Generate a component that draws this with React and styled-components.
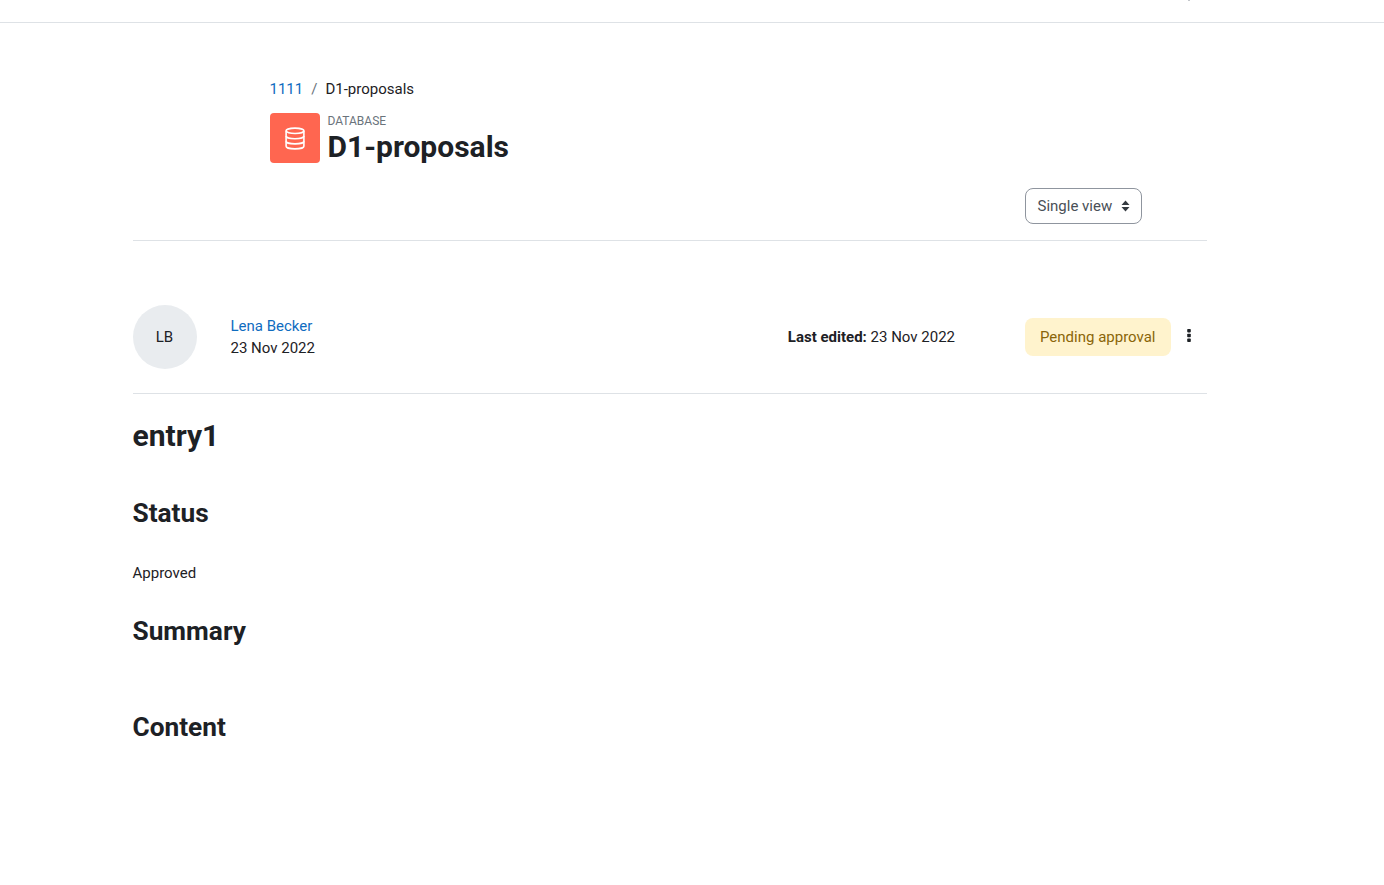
import React from "react";
import styled, { createGlobalStyle } from "styled-components";

const Global = createGlobalStyle`
  html, body { margin: 0; padding: 0; background: #fff; }
  body { font-family: Roboto, "Liberation Sans", sans-serif; font-size: 15px; line-height: 22.5px; color: #1d2125; }
  h1, h2, h3, p { margin: 0; }
`;

const Page = styled.div`
  height: 885px;
  overflow: hidden;
`;
const TopBar = styled.header`
  height: 22px;
  border-bottom: 1px solid #dee2e6;
  position: relative;
`;
const ClippedMark = styled.span`
  position: absolute;
  left: 1188px;
  top: 0;
  width: 2px;
  height: 1px;
  background: #c4c7cb;
`;
const Main = styled.main`
  width: 1074px;
  margin-left: 132.5px;
`;
const HeaderBlock = styled.section`
  padding: 55px 64.5px 16px 137.5px;
  border-bottom: 1px solid #dee2e6;
`;
const Crumbs = styled.nav`
  display: flex;
  align-items: center;
  height: 22px;
  margin-left: -0.5px;
`;
const Crumb = styled.a`
  color: #0f6cbf;
  text-decoration: none;
`;
const CrumbSep = styled.span`
  color: #6a737b;
  padding: 0 8px;
`;
const Title = styled.div`
  display: flex;
  gap: 8px;
  margin-top: 13px;
`;
const Badge = styled.div`
  width: 50px;
  height: 50px;
  margin-left: -0.5px;
  border-radius: 4px;
  background: #ff6650;
  display: flex;
  align-items: center;
  justify-content: center;
`;
const TitleText = styled.div`
  display: flex;
  flex-direction: column;
`;
const Kind = styled.div`
  font-size: 12px;
  line-height: 16px;
  color: #6a737b;
`;
const H1 = styled.h1`
  font-size: 30px;
  line-height: 36px;
  font-weight: 700;
`;
const ToolRow = styled.div`
  display: flex;
  justify-content: flex-end;
  margin-top: 23px;
`;
const SelectBox = styled.div`
  width: 117px;
  height: 36px;
  box-sizing: border-box;
  border: 1px solid #8f959e;
  border-radius: 8px;
  padding: 0 11.5px;
  display: flex;
  align-items: center;
  justify-content: space-between;
  color: #495057;
`;
const EntryRow = styled.section`
  display: flex;
  align-items: center;
  padding: 64px 0 24px;
  border-bottom: 1px solid #dee2e6;
`;
const Avatar = styled.div`
  width: 64px;
  height: 64px;
  border-radius: 50%;
  background: #e9ecef;
  display: flex;
  align-items: center;
  justify-content: center;
  flex: none;
`;
const Author = styled.div`
  margin-left: 34px;
  flex: 1;
`;
const Edited = styled.div`
  margin-right: 70px;
`;
const Pill = styled.div`
  background: #fff3cd;
  color: #8a6508;
  border-radius: 8px;
  height: 38px;
  padding: 0 15px;
  display: flex;
  align-items: center;
`;
const Kebab = styled.div`
  width: 36px;
  box-sizing: border-box;
  padding-left: 16px;
  display: flex;
  margin-bottom: 4px;
`;
const EntryTitle = styled.h2`
  font-size: 30px;
  line-height: 36px;
  font-weight: 700;
  margin-top: 24px;
`;
const FieldTitle = styled.h3`
  font-size: 26.25px;
  line-height: 32px;
  font-weight: 700;
  margin-top: ${(p) => p.$gap}px;
`;
const FieldValue = styled.p`
  margin-top: 33px;
`;

const DbIcon = () => (
  <svg width="20" height="23" viewBox="0 0 20 23" fill="none" stroke="#fff" strokeWidth="1.6">
    <ellipse cx="10" cy="3.8" rx="8.9" ry="2.7" />
    <path d="M1.1 3.8v15.4c0 1.5 4 2.7 8.9 2.7s8.9-1.2 8.9-2.7V3.8" />
    <path d="M1.1 9c0 1.5 4 2.7 8.9 2.7s8.9-1.2 8.9-2.7" />
    <path d="M1.1 14.2c0 1.5 4 2.7 8.9 2.7s8.9-1.2 8.9-2.7" />
  </svg>
);
const Sort = () => (
  <svg width="9" height="12" viewBox="0 0 9 12" fill="#343a40">
    <path d="M4.5 0.5 8.5 5H.5zM.5 7h8l-4 4.5z" />
  </svg>
);
const Dots = () => (
  <svg width="4" height="13" viewBox="0 0 4 13" fill="#1d2125">
    <rect x="0.2" y="0" width="3.6" height="3.4" rx="0.8" />
    <rect x="0.2" y="4.8" width="3.6" height="3.4" rx="0.8" />
    <rect x="0.2" y="9.6" width="3.6" height="3.4" rx="0.8" />
  </svg>
);

export default function App() {
  return (
    <Page>
      <Global />
      <TopBar><ClippedMark /></TopBar>
      <Main>
        <HeaderBlock>
          <Crumbs>
            <Crumb href="#">1111</Crumb>
            <CrumbSep>/</CrumbSep>
            <span>D1-proposals</span>
          </Crumbs>
          <Title>
            <Badge><DbIcon /></Badge>
            <TitleText>
              <Kind>DATABASE</Kind>
              <H1>D1-proposals</H1>
            </TitleText>
          </Title>
          <ToolRow>
            <SelectBox>Single view <Sort /></SelectBox>
          </ToolRow>
        </HeaderBlock>
        <EntryRow>
          <Avatar>LB</Avatar>
          <Author>
            <Crumb href="#">Lena Becker</Crumb>
            <div>23 Nov 2022</div>
          </Author>
          <Edited><b>Last edited:</b> 23 Nov 2022</Edited>
          <Pill>Pending approval</Pill>
          <Kebab><Dots /></Kebab>
        </EntryRow>
        <EntryTitle>entry1</EntryTitle>
        <FieldTitle $gap={43}>Status</FieldTitle>
        <FieldValue>Approved</FieldValue>
        <FieldTitle $gap={30}>Summary</FieldTitle>
        <FieldTitle $gap={64}>Content</FieldTitle>
      </Main>
    </Page>
  );
}
